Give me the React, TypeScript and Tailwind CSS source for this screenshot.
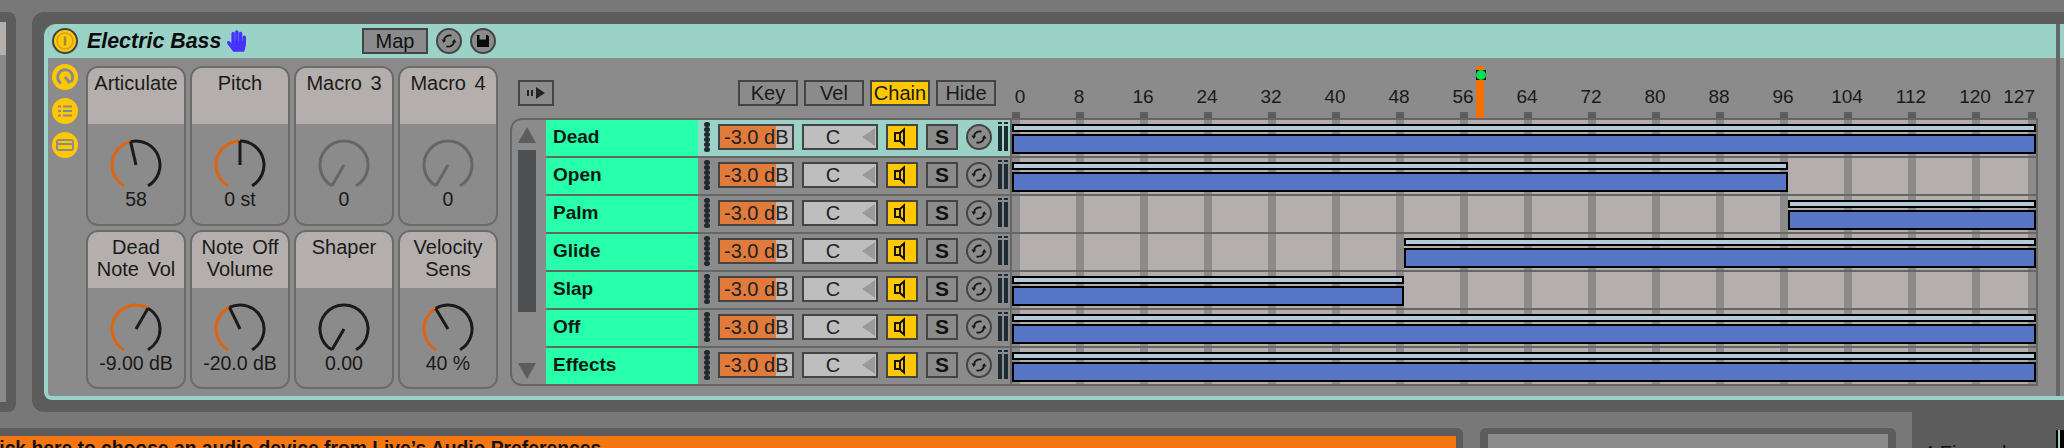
import { FaHandPaper } from "react-icons/fa"

const macros = [
  { label: "Articulate", value: "58", angle: -13, active: true },
  { label: "Pitch", value: "0 st", angle: 0, active: true },
  { label: "Macro 3", value: "0", angle: -150, active: false },
  { label: "Macro 4", value: "0", angle: -150, active: false },
  { label: "Dead\nNote Vol", value: "-9.00 dB", angle: 30, active: true },
  { label: "Note Off\nVolume", value: "-20.0 dB", angle: -26, active: true },
  { label: "Shaper", value: "0.00", angle: -150, active: true },
  { label: "Velocity\nSens", value: "40 %", angle: -31, active: true },
]

const chains = [
  { name: "Dead", start: 0, end: 1024 },
  { name: "Open", start: 0, end: 776 },
  { name: "Palm", start: 776, end: 1024 },
  { name: "Glide", start: 392, end: 1024 },
  { name: "Slap", start: 0, end: 392 },
  { name: "Off", start: 0, end: 1024 },
  { name: "Effects", start: 0, end: 1024 },
]

const ruler = ["8", "16", "24", "32", "40", "48", "56", "64", "72", "80", "88", "96", "104", "112", "120"]

function polar(angle: number, r: number) {
  const rad = (angle * Math.PI) / 180
  return `${28 + r * Math.sin(rad)} ${26 - r * Math.cos(rad)}`
}

function Knob({ angle, active }: { angle: number; active: boolean }) {
  const dark = active ? "#1a1a1a" : "#666666"
  const r = 24
  return (
    <svg width="56" height="52" viewBox="0 0 56 52" fill="none" strokeWidth="3">
      {angle > -150 && (
        <path
          d={`M${polar(-150, r)} A${r} ${r} 0 ${angle + 150 > 180 ? 1 : 0} 1 ${polar(angle, r)}`}
          stroke="#e0640f"
        />
      )}
      <path d={`M${polar(angle, r)} A${r} ${r} 0 ${150 - angle > 180 ? 1 : 0} 1 ${polar(150, r)}`} stroke={dark} />
      <path d={`M28 26 L${polar(angle, r)}`} stroke={dark} />
    </svg>
  )
}

function MacroCard({ label, value, angle, active }: (typeof macros)[number]) {
  return (
    <div className="rounded-[12px] border-2 border-[#6b6b6b] overflow-hidden flex flex-col items-center">
      <div className="w-full h-[56px] shrink-0 bg-[#b4afad] pt-[4px] text-center text-[20px] leading-[22px] text-[#1a1a1a] whitespace-pre-line [word-spacing:3px]">
        {label}
      </div>
      <div className="pt-[15px]">
        <Knob angle={angle} active={active} />
      </div>
      <div className="mt-[-3px] text-[19.5px] leading-[22px] text-[#1a1a1a] whitespace-nowrap">{value}</div>
    </div>
  )
}

function HotSwap() {
  return (
    <svg width="26" height="26" viewBox="0 0 26 26" fill="none">
      <circle cx="13" cy="13" r="12" fill="#8b8b8b" stroke="#444444" strokeWidth="2" />
      <path d="M15.5 7.6 A6 6 0 0 0 8 11.5" stroke="#111111" strokeWidth="1.8" />
      <path d="M5.5 11.5 h4.6 l-2.3 3.6z" fill="#111111" />
      <path d="M10.5 18.4 A6 6 0 0 0 18 14.5" stroke="#111111" strokeWidth="1.8" />
      <path d="M20.5 14.5 h-4.6 l2.3 -3.6z" fill="#111111" />
    </svg>
  )
}

function Triangle({ down }: { down?: boolean }) {
  return (
    <svg width="18" height="16" viewBox="0 0 18 16" className="shrink-0">
      <path d={down ? "M0 0 H18 L9 16z" : "M9 0 L18 16 H0z"} fill="#5a5e60" />
    </svg>
  )
}

function ChainRow({ name, start, end, selected }: (typeof chains)[number] & { selected: boolean }) {
  return (
    <div className="flex h-[36px]">
      <div className="w-[152px] shrink-0 bg-[#27ffaa] pl-[7px] text-[19px] leading-[34px] font-bold text-[#0c1a14]">
        {name}
      </div>
      <div className={`w-[312px] shrink-0 flex items-start ${selected ? "bg-[#9bd2c8]" : "bg-[#8b8b8b]"}`}>
        <div className="ml-[6px] mt-[2px] w-[6px] flex flex-col">
          {[0, 1, 2, 3, 4, 5].map((i) => (
            <div key={i} className="h-[5px] w-[6px] rounded-full bg-[#1e2a2e]" />
          ))}
        </div>
        <div className="ml-[8px] mt-[4px] w-[76px] h-[26px] border-2 border-[#444444] bg-[linear-gradient(90deg,#e07b3c_56px,#bebebe_56px)] pl-[4px] text-[20px] leading-[22px] text-[#222222] whitespace-nowrap">
          -3.0 dB
        </div>
        <div className="ml-[8px] mt-[4px] w-[76px] h-[26px] border-2 border-[#444444] bg-[#bebebe] flex items-center text-[20px] text-[#222222]">
          <span className="w-[58px] text-center leading-[22px]">C</span>
          <svg width="13" height="18" viewBox="0 0 13 18" className="ml-auto mr-[1px]">
            <path d="M0 9 L13 0 V18z" fill="#9a9a9a" />
          </svg>
        </div>
        <div className="ml-[8px] mt-[4px] w-[32px] h-[26px] border-2 border-[#444444] bg-[#ffc800]">
          <svg width="28" height="22" viewBox="0 0 28 22" fill="none" stroke="#111111" strokeWidth="2">
            <path d="M7 7 H12 L16 3.5 V18.5 L12 15 H7z" />
            <path d="M12 7 V15" />
          </svg>
        </div>
        <div className="ml-[8px] mt-[4px] w-[32px] h-[26px] border-2 border-[#444444] bg-[#8b8b8b] text-center text-[21px] leading-[22px] font-bold text-[#111111]">
          S
        </div>
        <div className="ml-[8px] mt-[4px] h-[26px]">
          <HotSwap />
        </div>
        <div className="ml-[6px] mt-[2px] flex gap-[2px]">
          {[0, 1].map((i) => (
            <div key={i} className="w-[4px] flex flex-col gap-[2px]">
              <div className="h-[2px] bg-[#1c2a33]" />
              <div className="h-[25px] bg-[#1c2a33]" />
            </div>
          ))}
        </div>
      </div>
      <div className="w-[2px] shrink-0 bg-[#666666]" />
      <div className="relative w-[1024px] shrink-0 pt-[4px] bg-[repeating-linear-gradient(90deg,#8b8b8b_0,#8b8b8b_8px,#b4afad_8px,#b4afad_64px)]">
        <div className="absolute top-0 bottom-0 right-0 w-[8px] bg-[#8b8b8b]" />
        <div className="relative flex flex-col gap-[2px]" style={{ marginLeft: start, width: end - start }}>
          <div className="h-[8px] border-2 border-black bg-[#b4ccda]" />
          <div className="h-[20px] border-2 border-black bg-[#5676c5]" />
        </div>
      </div>
    </div>
  )
}

export default function App() {
  return (
    <div className="w-[2064px] h-[448px] overflow-hidden flex flex-col bg-[#787878] font-['Liberation_Sans',Arial,sans-serif]">
      <div className="h-[12px] shrink-0" />
      <div className="h-[400px] shrink-0 flex">
        <div className="w-[16px] shrink-0 rounded-r-[8px] bg-[#5c5c5c] py-[10px]">
          <div className="w-[6px] h-full flex flex-col bg-[#8b8b8b]">
            <div className="h-[33px] bg-[#b4afad]" />
          </div>
        </div>
        <div className="w-[16px] shrink-0" />
        <div className="flex-1 rounded-l-[12px] bg-[#5c5c5c] pl-[12px] py-[12px]">
          <div className="h-full rounded-tl-[12px] rounded-bl-[8px] overflow-hidden border-l-4 border-b-4 border-[#9bd2c8] flex bg-[#8b8b8b]">
            <div className="w-[2012px] shrink-0 border-r-4 border-[#666666] flex flex-col">
              <div className="h-[34px] shrink-0 bg-[#9bd2c8] flex items-center pl-[4px]">
                <svg width="26" height="26" viewBox="0 0 26 26" fill="none">
                  <circle cx="13" cy="13" r="12" fill="#ffc800" stroke="#444444" strokeWidth="2" />
                  <circle cx="13" cy="13" r="8" stroke="#c9a226" strokeWidth="1.5" />
                  <path d="M13 8.5 V17.5" stroke="#a08a40" strokeWidth="2.5" />
                </svg>
                <div className="ml-[9px] w-[140px] text-[21.4px] leading-[24px] font-bold italic text-[#0a0a0a] whitespace-nowrap">
                  Electric Bass
                </div>
                <FaHandPaper className="text-[#4433ff] w-[19px] h-[22px]" />
                <div className="ml-[116px] w-[66px] h-[26px] border-2 border-[#444444] bg-[#8b8b8b] text-center text-[20px] leading-[22px] text-[#111111]">
                  Map
                </div>
                <div className="ml-[8px] h-[26px]">
                  <HotSwap />
                </div>
                <svg width="26" height="26" viewBox="0 0 26 26" className="ml-[8px]">
                  <circle cx="13" cy="13" r="12" fill="#8b8b8b" stroke="#444444" strokeWidth="2" />
                  <path d="M7 7 H17.5 L19 8.5 V19 H7z" fill="#0a0a0a" />
                  <path d="M9.5 7 H16 V11.5 H9.5z" fill="#8b8b8b" />
                </svg>
              </div>
              <div className="flex-1 flex">
                <div className="w-[38px] shrink-0 pl-[4px] pt-[6px] flex flex-col gap-[8px]">
                  <svg width="26" height="26" viewBox="0 0 26 26" fill="none">
                    <circle cx="13" cy="13" r="13" fill="#ffc800" />
                    <path d="M9 19.5 A7.5 7.5 0 1 1 19 18" stroke="#8b8b8b" strokeWidth="3" />
                    <path d="M13 13 L18 19" stroke="#8b8b8b" strokeWidth="3" />
                  </svg>
                  <svg width="26" height="26" viewBox="0 0 26 26" fill="none">
                    <circle cx="13" cy="13" r="13" fill="#ffc800" />
                    <path d="M6 8.5 H9 M6 13 H9 M6 17.5 H9 M11 8.5 H20 M11 13 H20 M11 17.5 H20" stroke="#8b8b8b" strokeWidth="2" />
                  </svg>
                  <svg width="26" height="26" viewBox="0 0 26 26" fill="none">
                    <circle cx="13" cy="13" r="13" fill="#ffc800" />
                    <rect x="5" y="8" width="16" height="10" rx="2" stroke="#8b8b8b" strokeWidth="2" />
                    <path d="M5 12 H21" stroke="#8b8b8b" strokeWidth="2" />
                  </svg>
                </div>
                <div className="w-[412px] shrink-0 pt-[8px] grid grid-cols-4 grid-rows-[160px_159px] gap-[4px]">
                  {macros.map((m) => (
                    <MacroCard key={m.label} {...m} />
                  ))}
                </div>
                <div className="ml-[12px] w-[1528px] shrink-0 flex flex-col">
                  <div className="h-[60px] flex">
                    <div className="w-[502px] shrink-0 pt-[22px] pl-[8px] flex items-start">
                      <div className="w-[36px] h-[26px] border-2 border-[#444444] flex items-center justify-center">
                        <svg width="18" height="12" viewBox="0 0 18 12">
                          <path d="M0 3 H2 V9 H0z M4 3 H6 V9 H4z M9 0 L18 6 L9 12z" fill="#222222" />
                        </svg>
                      </div>
                      <div className="ml-[184px] flex gap-[6px] text-[20px] leading-[22px] text-[#1a1a1a]">
                        <div className="w-[60px] h-[26px] border-2 border-[#444444] text-center">Key</div>
                        <div className="w-[60px] h-[26px] border-2 border-[#444444] text-center">Vel</div>
                        <div className="w-[60px] h-[26px] border-2 border-[#444444] bg-[#ffc800] text-center">Chain</div>
                        <div className="w-[60px] h-[26px] border-2 border-[#444444] text-center">Hide</div>
                      </div>
                    </div>
                    <div className="relative w-[1026px] flex flex-col">
                      <div className="pt-[28px] h-[54px] flex text-[19px] leading-[22px] text-[#1a1a1a]">
                        <div className="ml-[-19px] w-[54px] text-center shrink-0">0</div>
                        {ruler.map((n) => (
                          <div key={n} className="w-[64px] text-center shrink-0">
                            {n}
                          </div>
                        ))}
                        <div className="w-[28px] shrink-0 flex justify-end">127</div>
                      </div>
                      <div className="relative w-[1024px] h-[6px] bg-[repeating-linear-gradient(90deg,#5c5c5c_0,#5c5c5c_8px,transparent_8px,transparent_64px)]">
                        <div className="absolute top-0 bottom-0 right-0 w-[8px] bg-[#5c5c5c]" />
                      </div>
                      <div className="absolute left-[464px] top-[8px] w-[8px] h-[52px] bg-[#f57000]">
                        <div className="absolute left-0 top-[4px] w-[10px] h-[10px] bg-[#111111]">
                          <div className="w-[10px] h-[10px] rounded-full bg-[#00e050]" />
                        </div>
                      </div>
                    </div>
                  </div>
                  <div className="h-[268px] rounded-tl-[12px] rounded-bl-[12px] border-2 border-[#666666] overflow-hidden flex">
                    <div className="w-[34px] shrink-0 pl-[6px] pt-[7px] pb-[5px] flex flex-col">
                      <Triangle />
                      <div className="mt-[7px] w-[18px] h-[162px] bg-[#4d5154]" />
                      <div className="mt-auto">
                        <Triangle down />
                      </div>
                    </div>
                    <div className="flex flex-col gap-[2px] bg-[#666666]">
                      {chains.map((c, i) => (
                        <ChainRow key={c.name} {...c} selected={i === 0} />
                      ))}
                    </div>
                  </div>
                </div>
              </div>
            </div>
            <div className="flex-1 flex flex-col">
              <div className="h-[34px] bg-[#9bd2c8]" />
            </div>
          </div>
        </div>
      </div>
      <div className="h-[36px] shrink-0 flex">
        <div className="w-[1912px] shrink-0 rounded-tr-[6px] pt-[16px] flex">
          <div className="w-[1463px] shrink-0 rounded-tr-[6px] bg-[#5c5c5c] pt-[8px] pr-[7px]">
            <div className="h-full bg-[#f57711] overflow-hidden pt-[2px]">
              <div className="ml-[-20px] text-[19.3px] leading-[22px] font-bold text-[#111111] whitespace-nowrap">
                Click here to choose an audio device from Live’s Audio Preferences
              </div>
            </div>
          </div>
          <div className="ml-[17px] w-[416px] shrink-0 rounded-t-[6px] bg-[#5c5c5c] pt-[6px] px-[8px]">
            <div className="h-full bg-[#8b8b8b]" />
          </div>
        </div>
        <div className="flex-1 bg-[#5c5c5c] flex">
          <div className="ml-[11px] w-[133px] shrink-0 pt-[30px] text-[20px] leading-[22px] text-[#111111] whitespace-nowrap">
            4 Finger bass
          </div>
          <div className="mt-[18px] flex-1 bg-black pl-[2px] flex">
            <div className="w-[2px] bg-[#9bd2c8]" />
          </div>
        </div>
      </div>
    </div>
  )
}
